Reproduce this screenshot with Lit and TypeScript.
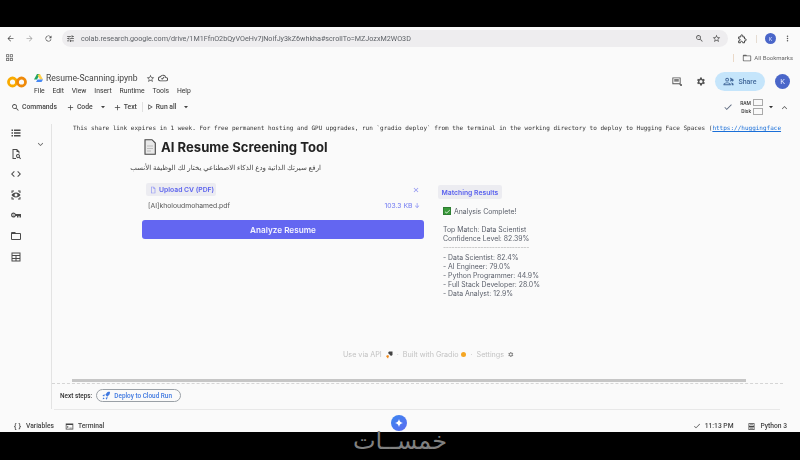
import { LitElement, html, css, svg } from "lit";
import { customElement } from "lit/decorators.js";

const ic = (d: string, size = 11, color = "#444", cls = "") => html`<svg class="ic ${cls}" width=${size} height=${size} viewBox="0 0 24 24" fill=${color}>${svg`<path d=${d}></path>`}</svg>`;
const P = {
  back: "M20 11H7.8l5.6-5.6L12 4l-8 8 8 8 1.4-1.4L7.8 13H20z",
  fwd: "M4 11h12.2l-5.6-5.6L12 4l8 8-8 8-1.4-1.4 5.6-5.6H4z",
  reload: "M17.6 6.4A8 8 0 1 0 19.7 14h-2.1a6 6 0 1 1-1.4-6.2L13 11h7V4z",
  tune: "M3 17v2h6v-2zM3 5v2h10V5zm10 16v-2h8v-2h-8v-2h-2v6zM7 9v2H3v2h4v2h2V9zm14 4v-2H11v2zM15 9h2V7h4V5h-4V3h-2z",
  zoom: "M15.5 14h-.8l-.3-.3a6.5 6.5 0 1 0-.7.7l.3.3v.8l5 5 1.5-1.500zm-6 0a4.500 4.500 0 1 1 0-9 4.500 4.500 0 0 1 0 9zM7 9h5v1H7z",
  star: "M22 9.2l-7.2-.6L12 2 9.2 8.6 2 9.2l5.5 4.7L5.8 21 12 17.3 18.2 21l-1.600-7.100zM12 15.400l-3.800 2.300 1-4.300-3.300-2.900 4.400-.4L12 6.100l1.700 4 4.400.4-3.300 2.900 1 4.300z",
  more: "M12 8a2 2 0 1 0 0-4 2 2 0 0 0 0 4zm0 2a2 2 0 1 0 0 4 2 2 0 0 0 0-4zm0 6a2 2 0 1 0 0 4 2 2 0 0 0 0-4z",
  apps: "M3 3h8v8H3zm2 2v4h4V5zm8-2h8v8h-8zm2 2v4h4V5zM3 13h8v8H3zm2 2v4h4v-4zm8-2h8v8h-8zm2 2v4h4v-4z",
  folder: "M20 6h-8l-2-2H4a2 2 0 0 0-2 2v12a2 2 0 0 0 2 2h16a2 2 0 0 0 2-2V8a2 2 0 0 0-2-2zm0 12H4V8h16z",
  cloud: "M19.400 10A7.500 7.500 0 0 0 5.400 8 6 6 0 0 0 6 20h13a5 5 0 0 0 .4-10zM19 18H6a4 4 0 0 1-.2-8h1L7.400 9a5.500 5.500 0 0 1 10.100 1.500l.3 1.500h1.200a3 3 0 0 1 0 6zM10 16l-2.500-2.500 1.400-1.400L10 13.200l4.100-4.100 1.400 1.400z",
  comment: "M3 3h18v15h3v3l-3 1-3-4H3zm2 2v11h14V5zm2 2h10v2H7zm0 3h10v2H7z",
  gear: "M19.400 13a7.500 7.500 0 0 0 0-2l2.100-1.600-2-3.500-2.500 1a7.400 7.400 0 0 0-1.700-1L15 3.300h-4l-.4 2.600a7.400 7.400 0 0 0-1.700 1l-2.500-1-2 3.500L6.600 11a7.500 7.500 0 0 0 0 2l-2.100 1.600 2 3.500 2.500-1a7.400 7.400 0 0 0 1.700 1l.4 2.600h4l.4-2.600a7.400 7.400 0 0 0 1.700-1l2.500 1 2-3.500zM13 15.500a3.500 3.500 0 1 1 0-7 3.500 3.500 0 0 1 0 7z",
  people: "M9 12a4 4 0 1 0 0-8 4 4 0 0 0 0 8zm0-6a2 2 0 1 1 0 4 2 2 0 0 1 0-4zm0 8c-2.700 0-8 1.300-8 4v2h16v-2c0-2.700-5.300-4-8-4zm-6 4c.2-.7 3.300-2 6-2s5.800 1.300 6 2zM15 4l1-.1a4 4 0 0 1 0 8h-1a6 6 0 0 0 0-7.900zm2 10c2.700.4 6 1.600 6 4v2h-4v-2c0-1.600-.8-3-2-4zM20 6h2v2h2v2h-2v2h-2v-2h-2V8h2z",
  search: "M15.500 14h-.8l-.3-.3a6.500 6.500 0 1 0-.7.7l.3.3v.8l5 5 1.500-1.500zm-6 0a4.500 4.500 0 1 1 0-9 4.500 4.500 0 0 1 0 9z",
  plus: "M19 13h-6v6h-2v-6H5v-2h6V5h2v6h6z",
  play: "M7 4v16l13-8zm2 3.600l7.200 4.400L9 16.400z",
  drop: "M6 9l6 7 6-7z",
  check: "M9 16.200L4.800 12l-1.400 1.400L9 19 21 7l-1.400-1.400z",
  up: "M12 8l-7 7 1.400 1.400L12 10.800l5.600 5.600L19 15z",
  down: "M12 16l7-7-1.400-1.400L12 13.200 6.400 7.600 5 9z",
  list: "M3 5h3v3H3zm5 0h13v3H8zM3 10.500h3v3H3zm5 0h13v3H8zM3 16h3v3H3zm5 0h13v3H8z",
  finddoc: "M5 2h9l5 5v4h-2V8h-4V4H7v16h5v2H5zm11 10a4 4 0 0 1 3.300 6.200l2.700 2.700-1.400 1.400-2.700-2.700A4 4 0 1 1 16 12zm0 2a2 2 0 1 0 0 4 2 2 0 0 0 0-4z",
  code: "M9.400 16.600L4.800 12l4.600-4.600L8 6l-6 6 6 6zm5.200 0l4.600-4.600-4.600-4.600L16 6l6 6-6 6z",
  eye: "M3 3h5v2H5v3H3zm13 0h5v5h-2V5h-3zM3 16h2v3h3v2H3zm16 0h2v5h-5v-2h3zM12 7c-4 0-7.300 2.200-9 5 1.700 2.800 5 5 9 5s7.300-2.200 9-5c-1.700-2.800-5-5-9-5zm0 8a3 3 0 1 1 0-6 3 3 0 0 1 0 6z",
  key: "M7 7a5 5 0 1 0 4.600 7H14v3h3v-3h2v3h3V10H11.600A5 5 0 0 0 7 7zm0 7.500a2.500 2.500 0 1 1 0-5 2.500 2.500 0 0 1 0 5zm0-1.500a1 1 0 1 0 0-2 1 1 0 0 0 0 2z",
  table: "M3 3h18v18H3zm2 2v3h14V5zm0 5v4h6v-4zm8 0v4h6v-4zm-8 6v3h6v-3zm8 0v3h6v-3z",
  braces: "M9 3H7a2 2 0 0 0-2 2v4a2 2 0 0 1-2 2v2a2 2 0 0 1 2 2v4a2 2 0 0 0 2 2h2v-2H7v-5a2 2 0 0 0-1.500-2A2 2 0 0 0 7 10V5h2zm6 0h2a2 2 0 0 1 2 2v4a2 2 0 0 0 2 2v2a2 2 0 0 0-2 2v2a2 2 0 0 1-2 2h-2v-2h2v-4a2 2 0 0 1 1.500-2A2 2 0 0 1 17 10V5h-2z",
  term: "M2 4h20v16H2zm2 4v10h16V8zm2 2l4 3-4 3zm6 5h6v1.500h-6z",
  ram: "M4 3h16v18H4zm2 2v5h12V5zm0 9v5h12v-5zM8 6.500h8V8H8zm0 9h8V17H8z",
  rocket: "M14 3c3-1.500 6-1.500 7-1 .5 1 .5 4-1 7l-6 6-5-5zM8 9l-4 1-3 3 5 1zm7 7l-1 4-3 3-1-5zM4 17c-1.500 1-2 3-2 5 2 0 4-.5 5-2z",
  doc: "M6 2h8l5 5v15H6zm2 2v16h9V8h-4V4z",
  close: "M19 6.400L17.600 5 12 10.600 6.400 5 5 6.400 10.600 12 5 17.600 6.400 19 12 13.400 17.600 19 19 17.600 13.400 12z",
};

@customElement("app-root")
export class AppRoot extends LitElement {
  static styles = css`
    :host { display: block; width: 800px; height: 460px; overflow: hidden; background: #000; font-family: Roboto, "Liberation Sans", sans-serif; color: #3c4043; position: relative; }
    .ic { display: block; flex: none; }
    .black { height: 27px; background: #000; }
    .bottom { height: 28px; background: #000; }
    .page { height: 405px; background: #fafafa; display: flex; flex-direction: column; filter: blur(0.35px); }
    .chrome { height: 23px; flex: none; display: flex; align-items: center; padding-left: 6px; }
    .nav { display: flex; gap: 10px; width: 56px; }
    .url { width: 666px; height: 17px; flex: none; background: #eeedef; border-radius: 9px; display: flex; align-items: center; padding: 0 7px 0 4px; box-sizing: border-box; font-size: 7.2px; color: #5f6368; gap: 6px; }
    .url .t { flex: 1; white-space: nowrap; }
    .url .rr { display: flex; gap: 8px; align-items: center; }
    .chrome-r { display: flex; align-items: center; margin-left: 9px; }
    .sep { width: 1px; height: 8px; background: #e5dcd2; margin: 0 8px 0 9px; }
    .kav { width: 11px; height: 11px; border-radius: 50%; background: #4a66c9; color: #dfe6ff; font-size: 5.5px; display: flex; align-items: center; justify-content: center; margin-right: 7px; }
    .bm { height: 15px; flex: none; display: flex; align-items: center; padding-left: 5px; }
    .bm .sp { flex: 1; }
    .bm .sep2 { width: 1px; height: 8px; background: #ead9c8; margin-right: 8px; }
    .bm .lb { font-size: 6px; color: #666; margin: 0 7px 0 2px; white-space: nowrap; }
    .head { height: 33px; flex: none; display: flex; align-items: center; padding-left: 7px; }
    .logo { flex: none; width: 20px; height: 12px; margin-right: 7px; }
    .titles { display: flex; flex-direction: column; gap: 2px; flex: 1; padding-top: 5px; }
    .tline { display: flex; align-items: center; font-size: 8.6px; color: #444; height: 12px; }
    .tline .nm { margin: 0 8px 0 3px; }
    .tline .ic + .ic { margin-left: 3px; }
    .menu { display: flex; font-size: 6.8px; color: #333; gap: 7.8px; height: 10px; align-items: center; }
    .hr { display: flex; align-items: center; padding-right: 10px; }
    .hgap { width: 13px; }
    .share { width: 50px; height: 19px; border-radius: 10px; background: #c5e5fb; color: #41689a; font-size: 7px; font-weight: 500; display: flex; align-items: center; justify-content: center; gap: 4px; margin: 0 10px 0 9px; }
    .bigk { width: 15px; height: 15px; border-radius: 50%; background: #4a66c9; color: #e5eaff; font-size: 7.5px; display: flex; align-items: center; justify-content: center; }
    .tb { height: 18px; flex: none; display: flex; align-items: center; padding-left: 11px; font-size: 6.8px; color: #444; font-weight: 500; }
    .tb .it { display: flex; align-items: center; gap: 2px; }
    .tb .vr { width: 1px; height: 10px; background: #e0e0e0; margin: 0 3px 0 5px; }
    .tb .sp { flex: 1; }
    .mr9 { margin-right: 9px; } .mr6 { margin-right: 6px; } .mr5 { margin-right: 5px; } .mr4 { margin-right: 4px; } .mr11 { margin-right: 11px; }
    .ramw { display: flex; flex-direction: column; font-size: 5px; align-items: flex-end; gap: 1px; margin: 0 4px 0 3px; color: #333; }
    .ramw div { display: flex; align-items: center; gap: 2px; height: 7.5px; }
    .ramw i { display: block; width: 10px; height: 7px; border: 0.5px solid #aaa; box-sizing: border-box; }
    .main { flex: 1; display: flex; min-height: 0; }
    .side { width: 51px; flex: none; position: relative; display: flex; flex-direction: column; align-items: flex-start; padding: 11px 0 0 10px; box-sizing: border-box; gap: 8.6px; }
    .chev { position: absolute; left: 36px; top: 24px; }
    .nb { flex: 1; border-left: 1px solid #e3e3e3; margin: 8px 17px 0 0; display: flex; flex-direction: column; min-width: 0; }
    .log { font-family: "DejaVu Sans Mono", monospace; font-size: 6px; color: #333; white-space: nowrap; padding-left: 21px; height: 8px; line-height: 8px; }
    .log a { color: #1a6fd8; text-decoration: underline; }
    .gr { margin: 5px 0 0 90px; display: flex; flex-direction: column; font-family: Inter, sans-serif; flex: 1; }
    .title { display: flex; align-items: center; gap: 5px; height: 20px; margin-left: 2px; font-size: 13.1px; font-weight: 700; color: #222; white-space: nowrap; }
    .sub { font-family: "Noto Sans", "DejaVu Sans", sans-serif; direction: rtl; font-size: 7px; color: #444; margin-top: 5px; height: 11px; line-height: 11px; width: 178px; margin-left: 1px; white-space: nowrap; }
    .cols { display: flex; gap: 14px; margin-top: 10px; }
    .l { width: 282px; flex: none; display: flex; flex-direction: column; }
    .up { display: flex; justify-content: space-between; align-items: center; padding: 0 4px; }
    .pill { display: inline-flex; align-items: center; gap: 2px; height: 13px; background: #ececf1; border-radius: 2px; color: #5b62ee; font-size: 6.8px; font-weight: 600; padding: 0 2px 0 3px; }
    .file { display: flex; justify-content: space-between; font-size: 6.8px; color: #555; padding: 0 4px 0 6px; margin-top: 5px; height: 10px; line-height: 10px; }
    .file b { font-weight: 400; color: #6f78f1; }
    .btn { height: 19px; margin-top: 9px; background: #6366f1; border-radius: 3px; color: #f3f3ff; font-size: 8.2px; font-weight: 600; display: flex; align-items: center; justify-content: center; }
    .res { display: flex; flex-direction: column; font-size: 6.9px; color: #5a5f6a; padding-top: 2px; }
    .res .pill { align-self: flex-start; height: 14px; padding: 0 3.5px; margin-bottom: 7px; }
    .done { display: flex; align-items: center; gap: 3px; margin: 0 0 9px 5px; height: 10px; }
    .tick { width: 8px; height: 8px; background: #3a9a3a; display: flex; align-items: center; justify-content: center; border: .5px solid #2e7d32; box-sizing: border-box; }
    .ln { margin-left: 5px; height: 9.2px; line-height: 9.2px; white-space: nowrap; }
    .rule { letter-spacing: -.3px; color: #aaa; }
    .foot { margin: auto 0 20px 0; display: flex; padding-left: 201px; align-items: center; font-size: 7.2px; color: #c2c2c2; gap: 3px; white-space: nowrap; }
    .foot .dot { width: 5px; height: 5px; border-radius: 50%; background: #f5a623; }
    .foot .m { margin: 0 1px; }
    .sb { height: 3px; background: #c6c6c6; margin: 0 37px 0 20px; flex: none; }
    .dash { border-top: 1px dashed #d5d5d5; flex: none; height: 0; margin-top: 1px; }
    .next { height: 25px; display: flex; align-items: center; padding: 0 0 2px 8px; box-sizing: border-box; gap: 4px; font-size: 6.4px; font-weight: 500; color: #333; flex: none; }
    .dep { height: 13px; border: 0.7px solid #9aa0a6; border-radius: 7px; display: flex; align-items: center; gap: 3px; padding: 0 5px; color: #3f78e0; box-sizing: border-box; width: 85px; }
    .hline { height: 1px; background: #e8e8e8; margin: 0 20px 0 54px; flex: none; }
    .st { height: 22px; flex: none; display: flex; align-items: center; padding: 10px 13px 0 13px; box-sizing: border-box; font-size: 6.7px; color: #444; font-weight: 500; }
    .st .g { display: flex; align-items: center; gap: 4px; }
    .st .sp { flex: 1; }
    .st .v { margin-right: 11px; }
    .st .c { margin-right: 14px; }
    .gem { position: absolute; left: 391px; top: 415px; width: 16px; height: 16px; border-radius: 50%; background: linear-gradient(135deg, #3b86f0, #5b6cf0); display: flex; align-items: center; justify-content: center; filter: blur(.35px); }
    .wm { position: absolute; left: 351px; top: 426px; width: 98px; text-align: center; color: #808080; font-family: "DejaVu Sans", sans-serif; font-size: 24px; line-height: 30px; direction: rtl; white-space: nowrap; }
  `;

  render() {
    const sideIcons = [P.list, P.finddoc, P.code, P.eye, P.key, P.folder, P.table];
    return html`
      <div class="black"></div>
      <div class="page">
        <div class="chrome">
          <div class="nav">${ic(P.back, 9, "#555")}${ic(P.fwd, 9, "#aaa")}${ic(P.reload, 9, "#555")}</div>
          <div class="url">${ic(P.tune, 9, "#444")}<span class="t">colab.research.google.com/drive/1M1FfnO2bQyVOeHv7jNoifJy3kZ6whkha#scrollTo=MZJozxM2WO3D</span>
            <span class="rr">${ic(P.zoom, 9, "#555")}${ic(P.star, 9, "#444")}</span></div>
          <div class="chrome-r">
            <svg class="ic" width="10" height="10" viewBox="0 0 24 24" fill="none" stroke="#444" stroke-width="2.4"><path d="M4 7h5V4.500a2.500 2.500 0 0 1 5 0V7h4v4.500h1.500a2.500 2.500 0 0 1 0 5H18V21h-4.500v-1a2.500 2.500 0 0 0-5 0v1H4v-4.500h1a2.500 2.500 0 0 0 0-5H4z"></path></svg>
            <span class="sep"></span><span class="kav">K</span>${ic(P.more, 9, "#555")}</div>
        </div>
        <div class="bm">${ic(P.apps, 9, "#666")}<span class="sp"></span><span class="sep2"></span>${ic(P.folder, 10, "#666")}<span class="lb">All Bookmarks</span></div>
        <div class="head">
          <svg class="logo" viewBox="0 0 20 12"><circle cx="5.5" cy="6" r="4" fill="none" stroke="#f9ab00" stroke-width="2.8"></circle><circle cx="14.5" cy="6" r="4" fill="none" stroke="#ef8a0a" stroke-width="2.8"></circle></svg>
          <div class="titles">
            <div class="tline">
              <svg width="9" height="8" viewBox="0 0 9 8"><path d="M3 0h3L3 5.500H0z" fill="#1fa463"></path><path d="M6 0l3 5.500H6L3.500 1z" fill="#ffd04b"></path><path d="M2 8l1.500-2.500H9L7.500 8z" fill="#4688f4"></path></svg>
              <span class="nm">Resume-Scanning.ipynb</span>${ic(P.star, 9, "#444")}${ic(P.cloud, 10, "#444")}
            </div>
            <div class="menu"><span>File</span><span>Edit</span><span>View</span><span>Insert</span><span>Runtime</span><span>Tools</span><span>Help</span></div>
          </div>
          <div class="hr">${ic(P.comment, 11, "#555")}<span class="hgap"></span>${ic(P.gear, 11, "#555")}
            <div class="share">${ic(P.people, 11, "#41689a")}Share</div><div class="bigk">K</div></div>
        </div>
        <div class="tb">
          <span class="it mr9">${ic(P.search, 9)}Commands</span>
          <span class="it mr6">${ic(P.plus, 9)}Code</span>${ic(P.drop, 8, "#444", "mr6")}
          <span class="it">${ic(P.plus, 9)}Text</span><span class="vr"></span>
          <span class="it mr5">${ic(P.play, 8)}Run all</span>${ic(P.drop, 8)}
          <span class="sp"></span>
          ${ic(P.check, 10, "#5f6b80", "mr4")}
          <div class="ramw"><div>RAM<i></i></div><div>Disk<i></i></div></div>
          ${ic(P.drop, 8, "#333", "mr5")}${ic(P.up, 9, "#555", "mr11")}
        </div>
        <div class="main">
          <div class="side">
            ${sideIcons.map((d) => ic(d, 12, "#4a4a4a"))}
            <span class="chev">${ic(P.down, 9, "#666")}</span>
          </div>
          <div class="nb">
            <div class="log">This share link expires in 1 week. For free permanent hosting and GPU upgrades, run \`gradio deploy\` from the terminal in the working directory to deploy to Hugging Face Spaces (<a>https://huggingface</a></div>
            <div class="gr">
              <div class="title">
                <svg width="12" height="16" viewBox="0 0 12 16"><path d="M1 .7h7l3.300 3.300V15.300H1z" fill="#e9e9e9" stroke="#444" stroke-width="1.100"></path><path d="M3 7h6M3 9.500h6M3 12h4" stroke="#aaa" stroke-width=".7"></path></svg>
                <span>AI Resume Screening Tool</span></div>
              <div class="sub">ارفع سيرتك الذاتية ودع الذكاء الاصطناعي يختار لك الوظيفة الأنسب</div>
              <div class="cols">
                <div class="l">
                  <div class="up"><span class="pill">${ic(P.doc, 8, "#8f95f5")}Upload CV (PDF)</span>${ic(P.close, 8, "#8b90f0")}</div>
                  <div class="file"><span>[AI]kholoudmohamed.pdf</span><b>103.3 KB ↓</b></div>
                  <div class="btn">Analyze Resume</div>
                </div>
                <div class="res">
                  <span class="pill">Matching Results</span>
                  <div class="done"><span class="tick">${ic(P.check, 7, "#fff")}</span>Analysis Complete!</div>
                  <div class="ln">Top Match: Data Scientist</div>
                  <div class="ln">Confidence Level: 82.39%</div>
                  <div class="ln rule">------------------------------</div>
                  <div class="ln">- Data Scientist: 82.4%</div>
                  <div class="ln">- AI Engineer: 79.0%</div>
                  <div class="ln">- Python Programmer: 44.9%</div>
                  <div class="ln">- Full Stack Developer: 28.0%</div>
                  <div class="ln">- Data Analyst: 12.9%</div>
                </div>
              </div>
              <div class="foot"><span>Use via API</span>
                <svg width="8" height="8" viewBox="0 0 8 8"><path d="M4 .5h3.500V4L6 5 3 2z" fill="#444"></path><path d="M1 5l2-1 1 1-1 2.500-1-1z" fill="#f0891a"></path></svg>
                <span class="m">·</span><span>Built with Gradio</span><span class="dot"></span><span class="m">·</span><span>Settings</span>${ic(P.gear, 7, "#888")}</div>
            </div>
            <div class="sb"></div>
            <div class="dash"></div>
            <div class="next"><span>Next steps:</span><span class="dep">${ic(P.rocket, 9, "#3f78e0")}Deploy to Cloud Run</span></div>
          </div>
        </div>
        <div class="hline"></div>
        <div class="st">
          <span class="g v">${ic(P.braces, 9)}Variables</span>
          <span class="g">${ic(P.term, 9)}Terminal</span>
          <span class="sp"></span>
          <span class="g c">${ic(P.check, 8)}11:13 PM</span>
          <span class="g">${ic(P.ram, 9)}Python 3</span>
        </div>
      </div>
      <div class="bottom"></div>
      <div class="gem"><svg width="8" height="8" viewBox="0 0 8 8"><path d="M4 0c.4 2.200 1.800 3.600 4 4-2.200.4-3.600 1.800-4 4-.4-2.200-1.800-3.600-4-4 2.200-.4 3.600-1.800 4-4z" fill="#fff"></path></svg></div>
      <div class="wm">خمســات</div>
    `;
  }
}
